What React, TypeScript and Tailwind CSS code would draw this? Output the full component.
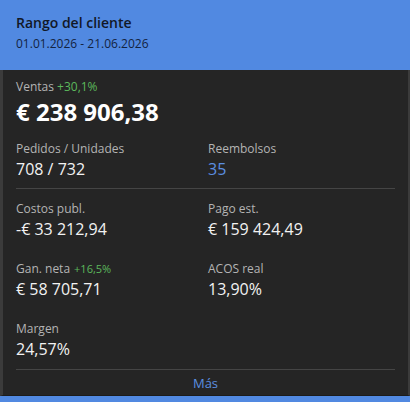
import React from "react";

const font = { fontFamily: '"Open Sans", "Noto Sans", sans-serif' };

function Stat({ label, value, extra, valueClass = "text-[#f2f2f2]" }: { label: string; value: string; extra?: string; valueClass?: string }) {
  return (
    <div>
      <div className="text-[12px] leading-[16px] text-[#b4b4b4]">
        {label}
        {extra && <span className="ml-1 text-[11px] text-[#5cb85c]">{extra}</span>}
      </div>
      <div className={`text-[16px] leading-[24px] ${valueClass}`}>{value}</div>
    </div>
  );
}

export default function App() {
  return (
    <div className="w-[410px] h-[402px] flex flex-col bg-[#5189e1]" style={font}>
      <div className="h-[70px] shrink-0 bg-[#5189e1] pl-4 pt-[13px]">
        <div className="text-[14px] leading-[20px] font-semibold text-[#111827]">Rango del cliente</div>
        <div className="mt-[3px] text-[12px] leading-[16px] text-[#13233f]">01.01.2026 - 21.06.2026</div>
      </div>
      <div className="h-[326px] shrink-0 bg-[#252525] border-l-[3px] border-r-[2px] border-b border-l-[#3b3b3b] border-r-[#3b3b3b] border-b-[#1c1c1c] pl-[13px] pr-[13px] pt-[8px] flex flex-col">
        <div className="text-[12px] leading-[17px] text-[#b4b4b4]">
          Ventas <span className="text-[12px] text-[#5cb85c]">+30,1%</span>
        </div>
        <div className="text-[24px] leading-[33px] font-bold text-white">€ 238 906,38</div>
        <div className="mt-[13px] grid grid-cols-[192px_1fr]">
          <Stat label="Pedidos / Unidades" value="708 / 732" />
          <Stat label="Reembolsos" value="35" valueClass="text-[#5b8fe0]" />
        </div>
        <div className="mt-[7px] h-px bg-[#454545]" />
        <div className="mt-[12px] grid grid-cols-[192px_1fr] gap-y-[20px]">
          <Stat label="Costos publ." value="-€ 33 212,94" />
          <Stat label="Pago est." value="€ 159 424,49" />
          <Stat label="Gan. neta" extra="+16,5%" value="€ 58 705,71" />
          <Stat label="ACOS real" value="13,90%" />
          <Stat label="Margen" value="24,57%" />
          <div />
        </div>
        <div className="mt-[8px] h-px bg-[#454545]" />
        <div className="mt-[3px] text-center text-[13px] leading-[20px] text-[#5b8fe0]">Más</div>
      </div>
    </div>
  );
}
